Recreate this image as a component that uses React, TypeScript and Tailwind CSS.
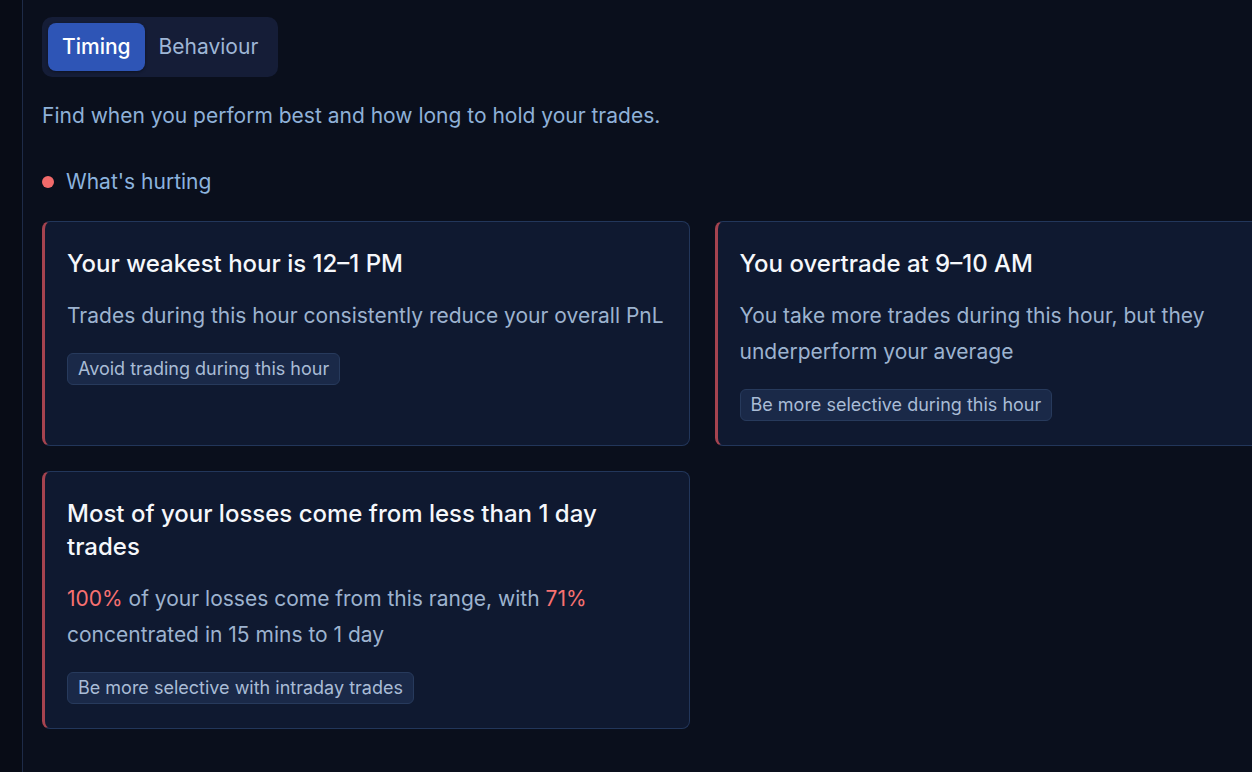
import React from "react";

function Chip({ children }: { children: React.ReactNode }) {
  return (
    <div className="mt-[19px] inline-flex h-[32px] items-center rounded-[6px] border border-[#273a5c] bg-[#1a2948] px-[10px] text-[18px] leading-none text-[#a9bcd6]">
      {children}
    </div>
  );
}

function Card({
  title,
  children,
  chip,
}: {
  title: React.ReactNode;
  children: React.ReactNode;
  chip: string;
}) {
  return (
    <div className="flex flex-col items-start rounded-[8px] border border-l-[3px] border-[#22365a] border-l-[#a5434f] bg-[#0f1930] pb-[24px] pl-[22px] pr-[22px] pt-[25px]">
      <div className="text-[24px] font-medium leading-[33px] text-[#f5f7fb]">{title}</div>
      <div className="mt-[18px] text-[21px] leading-[36px] text-[#9db3cf]">{children}</div>
      <Chip>{chip}</Chip>
    </div>
  );
}

export default function App() {
  return (
    <div
      className="flex h-[772px] w-full overflow-hidden bg-[#0a0f1c]"
      style={{ fontFamily: "Inter, 'Noto Sans', sans-serif" }}
    >
      <div className="h-full w-[23px] shrink-0 border-r border-[#1e2b47] bg-[#080c16]" />
      <div className="shrink-0 pl-[19px] pt-[17px]">
        <div className="inline-flex rounded-[10px] bg-[#151d37] p-[6px]">
          <div className="flex h-[48px] items-center rounded-[8px] bg-[#2e55b6] px-[14px] text-[21px] font-medium text-white shadow-[0_1px_3px_rgba(0,0,0,0.4)]">
            Timing
          </div>
          <div className="flex h-[48px] items-center px-[14px] text-[21px] text-[#9fb6d6]">
            Behaviour
          </div>
        </div>
        <div className="mt-[24px] text-[21px] leading-[30px] text-[#8fb1d8]">
          Find when you perform best and how long to hold your trades.
        </div>
        <div className="mt-[36px] flex items-center gap-[12px]">
          <span className="h-[12px] w-[12px] rounded-full bg-[#f26a6a]" />
          <span className="text-[21px] leading-[30px] text-[#8cb3de]">What's hurting</span>
        </div>
        <div className="mt-[24px] grid w-[1320px] grid-cols-2 gap-[25px]">
          <Card title="Your weakest hour is 12–1 PM" chip="Avoid trading during this hour">
            Trades during this hour consistently reduce your overall PnL
          </Card>
          <Card title="You overtrade at 9–10 AM" chip="Be more selective during this hour">
            You take more trades during this hour, but they
            <br />
            underperform your average
          </Card>
          <Card
            title={
              <>
                Most of your losses come from less than 1 day
                <br />
                trades
              </>
            }
            chip="Be more selective with intraday trades"
          >
            <span className="text-[#f87171]">100%</span> of your losses come from this range, with{" "}
            <span className="text-[#f87171]">71%</span>
            <br />
            concentrated in 15 mins to 1 day
          </Card>
        </div>
      </div>
    </div>
  );
}
